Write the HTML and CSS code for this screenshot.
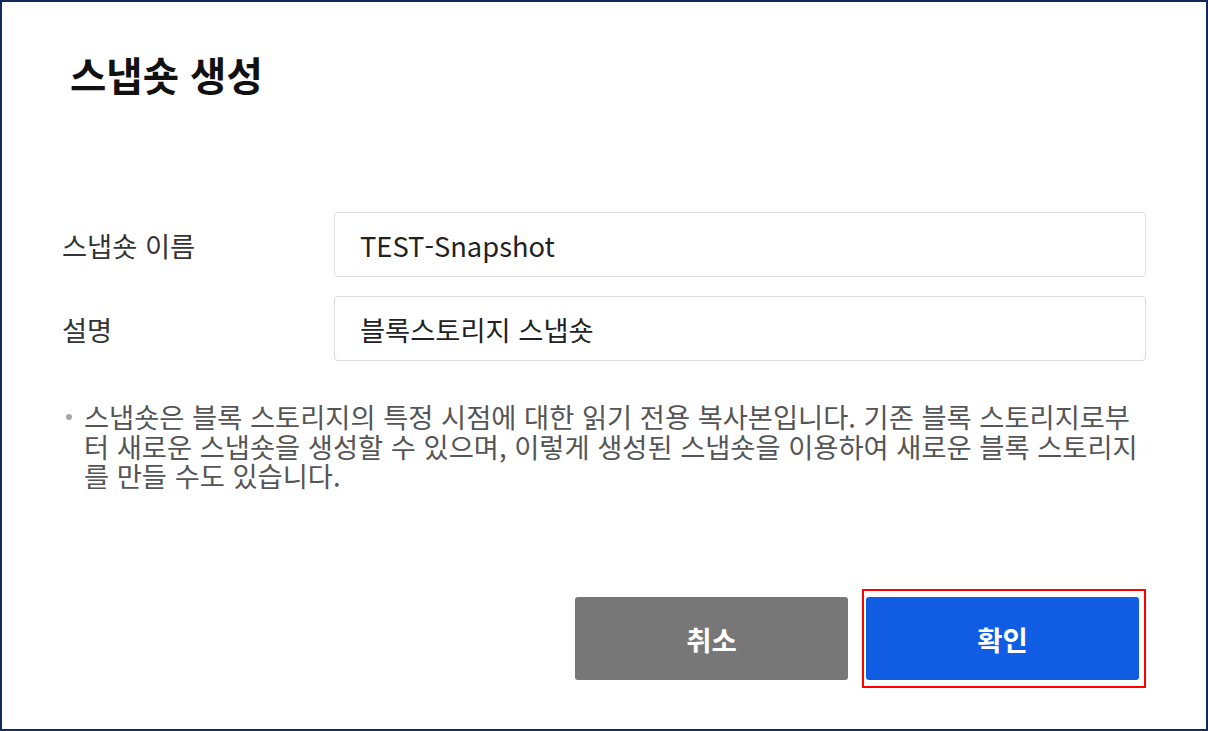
FILE: index.html
```html
<!DOCTYPE html>
<html lang="ko">
<head>
<meta charset="utf-8">
<title>스냅숏 생성</title>
<link rel="stylesheet" href="styles.css">
</head>
<body>
<div class="frame">
  <div class="dialog">
    <h1 class="title">스냅숏 생성</h1>
    <div class="form">
      <div class="row">
        <label class="label">스냅숏 이름</label>
        <div class="input">TEST-Snapshot</div>
      </div>
      <div class="row">
        <label class="label">설명</label>
        <div class="input">블록스토리지 스냅숏</div>
      </div>
    </div>
    <p class="note">스냅숏은 블록 스토리지의 특정 시점에 대한 읽기 전용 복사본입니다. 기존 블록 스토리지로부터 새로운 스냅숏을 생성할 수 있으며, 이렇게 생성된 스냅숏을 이용하여 새로운 블록 스토리지를 만들 수도 있습니다.</p>
    <div class="actions">
      <button class="btn btn-cancel">취소</button>
      <div class="highlight-wrap">
        <button class="btn btn-confirm">확인</button>
        <span class="highlight"></span>
      </div>
    </div>
  </div>
</div>
</body>
</html>
```

FILE: styles.css
```css
* { box-sizing: border-box; }
html, body { margin: 0; padding: 0; background: #fff; }
body {
  font-family: "Noto Sans CJK KR", "Noto Sans", sans-serif;
  color: #333;
}
.frame {
  width: 1208px;
  height: 731px;
  border: 2px solid #122a5c;
  background: #fff;
}
.dialog {
  height: 100%;
  display: flex;
  flex-direction: column;
  padding: 48px 60px 49px 60px;
}
.title {
  margin: 0 0 0 8px;
  font-size: 39.5px;
  line-height: 48px;
  font-weight: 700;
  color: #111;
}
.form {
  margin-top: 114px;
  display: flex;
  flex-direction: column;
  gap: 19px;
}
.row {
  display: grid;
  grid-template-columns: 272px 1fr;
  align-items: center;
  height: 65px;
}
.label {
  font-size: 27.3px;
  color: #333;
}
.input {
  height: 65px;
  border: 1px solid #dcdcdc;
  border-radius: 4px;
  padding: 0 25px;
  display: flex;
  align-items: center;
  font-size: 27.3px;
  color: #222;
}
.note {
  position: relative;
  margin: 41px 0 0 0;
  padding-left: 22px;
  font-size: 27.3px;
  line-height: 29.5px;
  color: #555;
}
.note::before {
  content: "";
  position: absolute;
  left: 4px;
  top: 12px;
  width: 6px;
  height: 6px;
  border-radius: 50%;
  background: #a8a8a8;
}
.actions {
  margin-top: auto;
  display: flex;
  justify-content: flex-end;
  gap: 18px;
  padding-right: 7px;
}
.btn {
  width: 273px;
  height: 83px;
  border: none;
  border-radius: 3px;
  color: #fff;
  font-family: inherit;
  font-size: 27.5px;
  font-weight: 700;
  cursor: pointer;
}
.btn-cancel { background: #777777; }
.btn-confirm { background: #105de3; display: block; }
.highlight-wrap { position: relative; }
.highlight {
  position: absolute;
  left: -4px;
  right: -7px;
  top: -8px;
  bottom: -8px;
  border: 2px solid #ff0000;
  pointer-events: none;
}
```
